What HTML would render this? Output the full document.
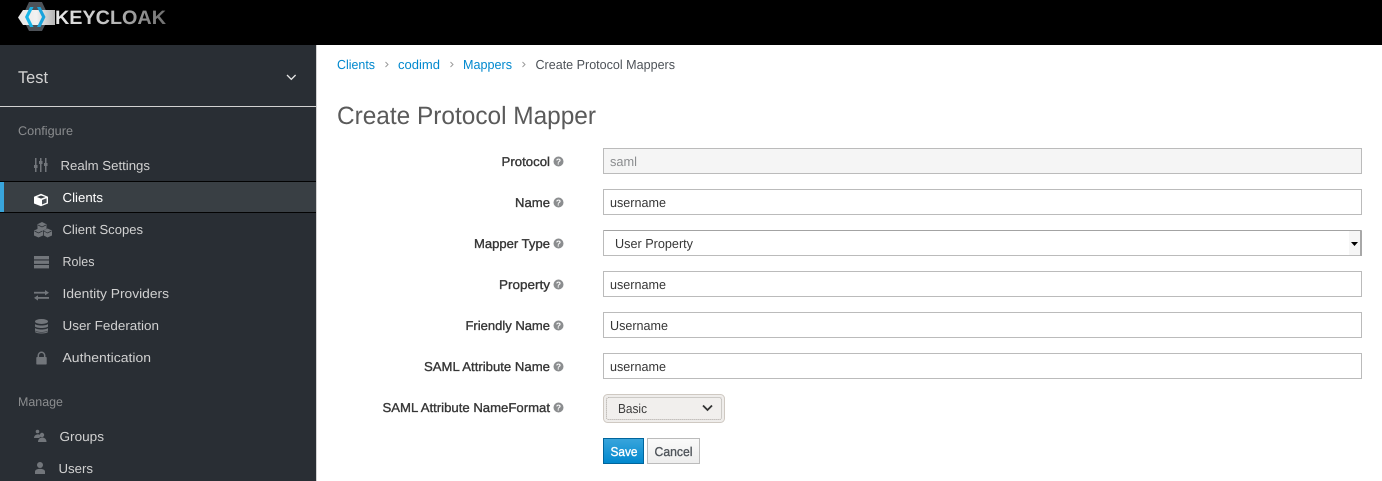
<!DOCTYPE html>
<html lang="en"><head><meta charset="utf-8"><title>Create Protocol Mapper</title>
<style>
html,body{margin:0;padding:0;background:#fff;width:1382px;height:481px;overflow:hidden}
svg{display:block}
text{font-family:"Liberation Sans",sans-serif;font-size:13px;text-rendering:geometricPrecision}
.nav{fill:#d1d1d1}
.sec{fill:#8b8d8f;font-size:12.5px}
.lnk{fill:#0088ce}
.lbl{fill:#363636;stroke:#363636;stroke-width:.35px;font-size:12.8px}
.val{fill:#363636}
.ic{fill:#72767b}
.in{fill:#fff;stroke:#bbb;stroke-width:1}
.q{fill:#fff;font-size:8.5px;font-weight:bold}
</style></head><body>
<svg width="1382" height="481" viewBox="0 0 1382 481" xmlns="http://www.w3.org/2000/svg">
<defs>
<linearGradient id="kg" x1="0" x2="1" y1="0" y2="0"><stop offset="0" stop-color="#e8e8e8"/><stop offset=".45" stop-color="#c4c4c4"/><stop offset="1" stop-color="#6f6f6f"/></linearGradient>
<linearGradient id="sv" x1="0" x2="0" y1="0" y2="1"><stop offset="0" stop-color="#39a5dc"/><stop offset="1" stop-color="#0088ce"/></linearGradient>
<linearGradient id="cn" x1="0" x2="0" y1="0" y2="1"><stop offset="0" stop-color="#fafafa"/><stop offset="1" stop-color="#ededed"/></linearGradient>
<linearGradient id="bx" x1="0" x2="1" y1="0" y2="0"><stop offset="0" stop-color="#e6e6e6"/><stop offset=".5" stop-color="#f2f2f2"/><stop offset="1" stop-color="#b4b4b4"/></linearGradient>
</defs>
<rect x="0" y="0" width="1382" height="45" fill="#000"/>
<rect x="0" y="45" width="316" height="436" fill="#292e34"/>
<rect x="316" y="45" width="1" height="436" fill="#d1d1d1"/>

<!-- logo -->
<polygon points="22,17 29,2 42,2 49,17 42,31 29,31" fill="#4d5258"/>
<polygon points="18,17.500 23,10 55,10 55,25 23,25" fill="url(#bx)"/>
<polygon points="30,7 33.500,7 28.500,17 33.500,27 30,27 25,17" fill="#19b5e8"/>
<polygon points="37,7 40.500,7 45.500,17 40.500,27 37,27 42,17" fill="#19a3dc"/>
<text x="55" y="24" font-weight="bold" fill="url(#kg)" textLength="111" lengthAdjust="spacingAndGlyphs" style="font-size:19.500px">KEYCLOAK</text>

<!-- realm -->
<text x="18" y="83" class="nav" style="font-size:17px" textLength="30" lengthAdjust="spacingAndGlyphs">Test</text>
<path d="M287,75 L291.300,79.300 L295.600,75" fill="none" stroke="#e6e6e6" stroke-width="1.300"/>
<rect x="0" y="106" width="316" height="1" fill="#d1d1d1"/>

<text x="18" y="135" class="sec" textLength="55" lengthAdjust="spacingAndGlyphs">Configure</text>

<!-- active row -->
<rect x="0" y="181" width="316" height="32" fill="#393f44"/>
<rect x="0" y="181" width="316" height="1" fill="#030303"/>
<rect x="0" y="212" width="316" height="1" fill="#030303"/>
<rect x="0" y="182" width="4" height="30" fill="#39a5dc"/>

<text x="60.500" y="170" class="nav" textLength="89.500" lengthAdjust="spacingAndGlyphs">Realm Settings</text>
<text x="62.500" y="202" fill="#fff" textLength="40.500" lengthAdjust="spacingAndGlyphs">Clients</text>
<text x="62.500" y="234" class="nav" textLength="80.500" lengthAdjust="spacingAndGlyphs">Client Scopes</text>
<text x="62.500" y="266" class="nav" textLength="32" lengthAdjust="spacingAndGlyphs">Roles</text>
<text x="62.500" y="298" class="nav" textLength="106.500" lengthAdjust="spacingAndGlyphs">Identity Providers</text>
<text x="62.500" y="330" class="nav" textLength="96.500" lengthAdjust="spacingAndGlyphs">User Federation</text>
<text x="62.500" y="362" class="nav" textLength="88.500" lengthAdjust="spacingAndGlyphs">Authentication</text>
<text x="18" y="406" class="sec" textLength="45" lengthAdjust="spacingAndGlyphs">Manage</text>
<text x="59.500" y="441" class="nav" textLength="44.500" lengthAdjust="spacingAndGlyphs">Groups</text>
<text x="58.500" y="473" class="nav" textLength="34.500" lengthAdjust="spacingAndGlyphs">Users</text>

<!-- icons -->
<g class="ic">
<rect x="35" y="158" width="1.500" height="14"/><rect x="40" y="158" width="1.500" height="14"/><rect x="45" y="158" width="1.500" height="14"/>
<rect x="34" y="165" width="3.500" height="3"/><rect x="39" y="161" width="3.500" height="3"/><rect x="44" y="163" width="3.500" height="3"/>
<polygon points="42,222 46.500,224.200 46.500,229 42,231 37.500,229 37.500,224.200"/>
<polygon points="38.500,228.500 43,230.500 43,235.500 38.500,237.500 34,235.500 34,230.500"/>
<polygon points="47.500,228.500 52,230.500 52,235.500 47.500,237.500 43.800,235.500 43.800,230.500"/>
<path d="M34.500,231 L38.500,233 L42.500,231 M43.800,231 L47.500,233 L51.500,231 M38,225 L42,227 L46,225" fill="none" stroke="#292e34" stroke-width=".7"/>
<rect x="34" y="256" width="15" height="3.400"/><rect x="34" y="260.500" width="15" height="3.400"/><rect x="34" y="265" width="15" height="3.400"/>
<rect x="34" y="291.800" width="12" height="1.800"/><polygon points="45,290 49,292.700 45,295.400"/>
<rect x="37" y="297" width="12" height="1.800"/><polygon points="38,295.200 34,297.900 38,300.600"/>
<ellipse cx="41.500" cy="321.500" rx="6.500" ry="2.500"/>
<path d="M35,324 c1.500,2 11.500,2 13,0 v2.500 c-1.500,2 -11.500,2 -13,0z"/>
<path d="M35,328 c1.500,2 11.500,2 13,0 v2.500 c-1.500,2 -11.500,2 -13,0z"/>
<path d="M35,331 c1.500,2 11.500,2 13,0 v1 c-1.500,2 -11.500,2 -13,0z"/>
<rect x="36.300" y="357" width="10.400" height="7.500" rx=".8"/>
<path d="M38.300,357.500 v-2 a3.200,3.200 0 0 1 6.400,0 v2" fill="none" stroke="#72767b" stroke-width="1.500"/>
<circle cx="37.500" cy="431.500" r="1.800"/><path d="M34,438 c0,-4.500 7,-4.500 7,-1.500 l-2,1.500z"/>
<circle cx="42" cy="435" r="2.200"/><path d="M38,442 c0,-6 8.500,-6 8.500,0z"/>
<circle cx="40" cy="465" r="3"/><path d="M35,474 v-2.500 c0,-3.500 10,-3.500 10,0 v2.500z"/>
</g>
<!-- cube -->
<path d="M41,193.800 L48,196.800 V203.500 L41,206.300 L34,203.500 V196.800Z" fill="#fff"/>
<path d="M37,197 L41,195.500 L45.500,197 L41,198.600Z" fill="#393f44"/>
<path d="M42,200 L46.600,198.200 V202.600 L42,204.500Z" fill="#4a5056"/>

<!-- breadcrumb -->
<text x="337" y="69" class="lnk" textLength="38" lengthAdjust="spacingAndGlyphs">Clients</text>
<text x="398" y="69" class="lnk" textLength="42" lengthAdjust="spacingAndGlyphs">codimd</text>
<text x="463" y="69" class="lnk" textLength="49" lengthAdjust="spacingAndGlyphs">Mappers</text>
<text x="535.500" y="69" fill="#4d5258" textLength="139.500" lengthAdjust="spacingAndGlyphs">Create Protocol Mappers</text>
<path d="M385.500,62 L388,64.500 L385.500,67 M450.500,62 L453,64.500 L450.500,67 M522.500,62 L525,64.500 L522.500,67" fill="none" stroke="#9c9c9c" stroke-width="1"/>

<text x="337" y="124" fill="#5a5a5a" style="font-size:25px" textLength="259" lengthAdjust="spacingAndGlyphs">Create Protocol Mapper</text>

<!-- labels -->
<text x="501.500" y="166" class="lbl" textLength="48.500" lengthAdjust="spacingAndGlyphs">Protocol</text>
<text x="515" y="207" class="lbl" textLength="35" lengthAdjust="spacingAndGlyphs">Name</text>
<text x="474" y="248" class="lbl" textLength="76" lengthAdjust="spacingAndGlyphs">Mapper Type</text>
<text x="499" y="289" class="lbl" textLength="51" lengthAdjust="spacingAndGlyphs">Property</text>
<text x="465.500" y="330" class="lbl" textLength="84.500" lengthAdjust="spacingAndGlyphs">Friendly Name</text>
<text x="424" y="371" class="lbl" textLength="126" lengthAdjust="spacingAndGlyphs">SAML Attribute Name</text>
<text x="382.500" y="412" class="lbl" textLength="167.500" lengthAdjust="spacingAndGlyphs">SAML Attribute NameFormat</text>

<!-- help icons -->
<g fill="#8b8d8f">
<circle cx="558.500" cy="161.500" r="5"/><circle cx="558.500" cy="202.500" r="5"/><circle cx="558.500" cy="243.500" r="5"/><circle cx="558.500" cy="284.500" r="5"/><circle cx="558.500" cy="325.500" r="5"/><circle cx="558.500" cy="366.500" r="5"/><circle cx="558.500" cy="407.500" r="5"/>
</g>
<g text-anchor="middle">
<text x="558.500" y="164.700" class="q">?</text><text x="558.500" y="205.700" class="q">?</text><text x="558.500" y="246.700" class="q">?</text><text x="558.500" y="287.700" class="q">?</text><text x="558.500" y="328.700" class="q">?</text><text x="558.500" y="369.700" class="q">?</text><text x="558.500" y="410.700" class="q">?</text>
</g>

<!-- inputs -->
<rect x="603.500" y="148.500" width="758" height="25" fill="#f5f5f5" stroke="#bbb"/>
<rect x="603.500" y="189.500" width="758" height="25" class="in"/>
<rect x="603.500" y="230.500" width="758" height="25" class="in"/>
<rect x="604" y="230" width="757" height="1" fill="#a3a3a3"/>
<rect x="603.500" y="271.500" width="758" height="25" class="in"/>
<rect x="603.500" y="312.500" width="758" height="25" class="in"/>
<rect x="603.500" y="353.500" width="758" height="25" class="in"/>
<rect x="1349" y="231" width="11" height="24" fill="#f6f6f6"/>
<rect x="1360" y="231" width="2" height="25" fill="#a8a8a8"/>
<polygon points="1351,242 1358,242 1354.500,246" fill="#000"/>

<text x="610" y="166" fill="#8b8d8f" textLength="27" lengthAdjust="spacingAndGlyphs">saml</text>
<text x="610" y="207" class="val" textLength="56" lengthAdjust="spacingAndGlyphs">username</text>
<text x="615" y="248" class="val" textLength="78" lengthAdjust="spacingAndGlyphs">User Property</text>
<text x="610" y="289" class="val" textLength="56" lengthAdjust="spacingAndGlyphs">username</text>
<text x="610" y="330" class="val" textLength="58" lengthAdjust="spacingAndGlyphs">Username</text>
<text x="610" y="371" class="val" textLength="56" lengthAdjust="spacingAndGlyphs">username</text>

<!-- basic select -->
<rect x="603.500" y="394.500" width="121" height="28" rx="4" fill="#efedeb" stroke="#cfc9c2"/>
<rect x="606.500" y="397.500" width="115" height="22" rx="2" fill="#f1efed" stroke="#a9a5a0" stroke-dasharray="1 1"/>
<text x="618" y="413" fill="#3c3c3c" textLength="29" lengthAdjust="spacingAndGlyphs">Basic</text>
<path d="M703,405.500 L707.500,410 L712,405.500" fill="none" stroke="#333" stroke-width="1.800"/>

<!-- buttons -->
<rect x="603.500" y="438.500" width="40" height="25" fill="url(#sv)" stroke="#00659c"/>
<text x="610.500" y="456" fill="#fff" stroke="#fff" stroke-width=".3" style="font-size:12.800px" textLength="27" lengthAdjust="spacingAndGlyphs">Save</text>
<rect x="647.500" y="438.500" width="52" height="25" fill="url(#cn)" stroke="#bbb"/>
<text x="654.500" y="456" fill="#4d5258" stroke="#4d5258" stroke-width=".3" style="font-size:12.800px" textLength="38" lengthAdjust="spacingAndGlyphs">Cancel</text>
</svg>
</body></html>
